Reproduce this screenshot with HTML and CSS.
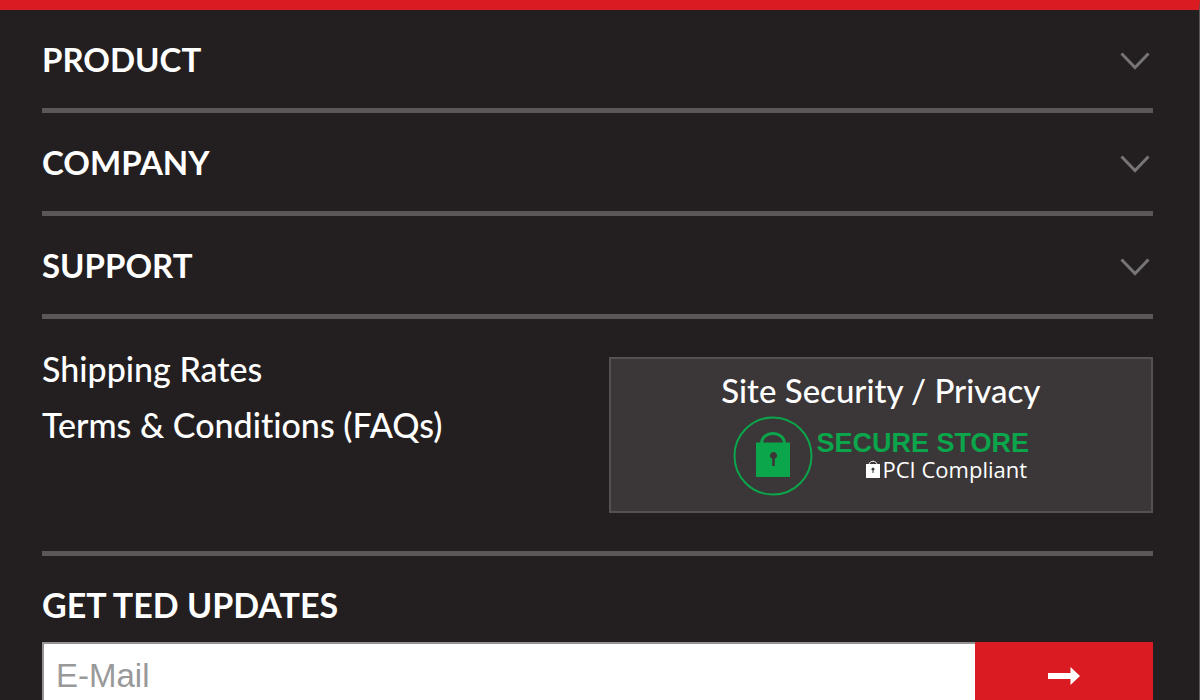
FILE: index.html
```html
<!DOCTYPE html>
<html lang="en">
<head>
<meta charset="utf-8">
<title>Footer</title>
<link rel="stylesheet" href="styles.css">
</head>
<body>
<footer class="footer">
  <nav class="menu" aria-label="Footer sections">
    <button class="menu-row" type="button" aria-expanded="false"><span>PRODUCT</span>
      <svg class="chevron" viewBox="0 0 30 18" aria-hidden="true"><path d="M1.500 1.500 15 15.500 28.500 1.500"/></svg></button>
    <button class="menu-row" type="button" aria-expanded="false"><span>COMPANY</span>
      <svg class="chevron" viewBox="0 0 30 18" aria-hidden="true"><path d="M1.500 1.500 15 15.500 28.500 1.500"/></svg></button>
    <button class="menu-row" type="button" aria-expanded="false"><span>SUPPORT</span>
      <svg class="chevron" viewBox="0 0 30 18" aria-hidden="true"><path d="M1.500 1.500 15 15.500 28.500 1.500"/></svg></button>
  </nav>
  <section class="info">
    <div class="links">
      <a href="#shipping">Shipping Rates</a>
      <a href="#terms">Terms &amp; Conditions (FAQs)</a>
    </div>
    <a class="security" href="#security">
      <span class="security-title">Site Security / Privacy</span>
      <span class="badge">
        <svg class="seal" viewBox="0 0 80 80" aria-hidden="true">
          <circle class="seal-line" cx="40" cy="40" r="38.500"/>
          <path class="seal-shackle" d="M28.500 28C28.500 14 51.500 14 51.500 28"/>
          <path class="seal-body" fill-rule="evenodd" d="M23 26.500H57V61H23ZM39.200 42.800V50H41.800V42.800A3.500 3.500 0 1 0 39.200 42.800Z"/>
        </svg>
        <span class="badge-text">
          <span class="badge-name">SECURE STORE</span>
          <span class="badge-note">
            <svg class="lock" viewBox="0 0 14 18" aria-hidden="true">
              <path class="lock-shackle" d="M3 5C3 0 11 0 11 5"/>
              <path class="lock-body" fill-rule="evenodd" d="M0 4H14V18H0ZM6.500 10.500V13H7.500V10.500A1.500 1.500 0 1 0 6.500 10.500Z"/>
            </svg>
            <span>PCI Compliant</span>
          </span>
        </span>
      </span>
    </a>
  </section>
  <form class="updates">
    <label class="updates-label" for="email">GET TED UPDATES</label>
    <div class="updates-row">
      <input class="email" id="email" type="email" placeholder="E-Mail">
      <button class="send" type="submit" aria-label="Subscribe">
        <svg class="arrow" viewBox="0 0 32 18" aria-hidden="true"><path d="M0 6H22.500V0L32 9 22.500 18V12H0Z"/></svg>
      </button>
    </div>
  </form>
</footer>
</body>
</html>
```
FILE: styles.css
```css
* {
  box-sizing: border-box;
}

body {
  height: 100vh;
  margin: 0;
  overflow: hidden;
  background: #231f20;
  color: #fff;
  font-family: Lato, "Liberation Sans", sans-serif;
  font-variant-ligatures: none;
}

.footer {
  min-height: 100vh;
  padding: 0 46px 0 42px;
  border-top: 10px solid #da1b21;
  border-right: 1px solid #5b5758;
}

a {
  color: inherit;
  text-decoration: none;
}

button {
  border: 0;
  cursor: pointer;
}

.menu-row {
  display: flex;
  align-items: center;
  justify-content: space-between;
  width: 100%;
  padding: 29px 3px 29px 0;
  border-bottom: 5px solid #5b5758;
  background: none;
  color: inherit;
  font: bold 33px/40px Lato, "Liberation Sans", sans-serif;
}

.chevron {
  width: 30px;
  height: 18px;
  margin-top: 4px;
  fill: none;
  stroke: #777475;
  stroke-width: 3;
}

.info {
  display: flex;
  justify-content: space-between;
  padding: 38px 0;
  border-bottom: 5px solid #5b5758;
}

.links {
  display: flex;
  flex-direction: column;
  gap: 16px;
  margin-top: -8px;
  font-size: 34px;
  font-weight: 500;
  line-height: 40px;
}

.security {
  display: flex;
  flex-direction: column;
  align-items: center;
  width: 49%;
  height: 156px;
  padding-top: 11px;
  border: 2px solid #555152;
  background: #3b3637;
}

.security-title {
  margin-bottom: 6px;
  font-size: 33px;
  font-weight: 500;
  line-height: 40px;
}

.badge {
  display: flex;
  gap: 4px;
}

.seal {
  width: 80px;
  height: 80px;
}

.seal-line,
.seal-shackle {
  fill: none;
  stroke: #0ba54b;
  stroke-width: 2;
}

.seal-shackle {
  stroke-width: 3;
}

.seal-body {
  fill: #0ba54b;
}

.badge-text {
  display: flex;
  flex-direction: column;
  align-items: flex-end;
  padding-top: 14px;
}

.badge-name {
  color: #0ba54b;
  font: bold 27px/26px "Liberation Sans", sans-serif;
}

.badge-note {
  display: flex;
  align-items: center;
  gap: 3px;
  margin-right: 2px;
  font: 22px/26px "Open Sans", sans-serif;
}

.lock {
  width: 14px;
  height: 18px;
}

.lock-shackle {
  fill: none;
  stroke: #fff;
}

.lock-body {
  fill: #fff;
}

.updates {
  padding-top: 29px;
}

.updates-label {
  display: block;
  font-size: 34px;
  font-weight: bold;
  line-height: 40px;
}

.updates-row {
  display: flex;
  margin-top: 17px;
}

.email {
  flex: 1;
  min-width: 0;
  height: 67px;
  padding: 0 12px;
  border: 2px solid #959394;
  border-right: 0;
  border-radius: 0;
  background: #fff;
  color: #231f20;
  font: 33px "Liberation Sans", sans-serif;
}

.email::placeholder {
  color: #999;
}

.send {
  display: grid;
  place-items: center;
  width: 16%;
  background: #da1b21;
}

.arrow {
  width: 32px;
  height: 18px;
  fill: #fff;
}
```
